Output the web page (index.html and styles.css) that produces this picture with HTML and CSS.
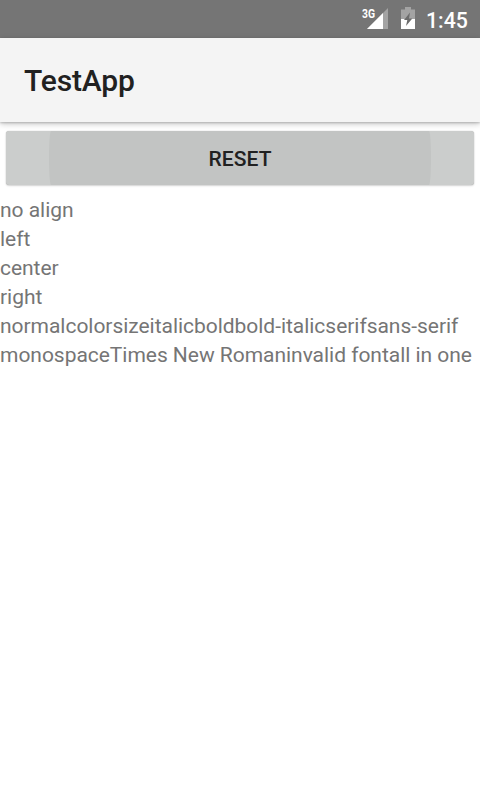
FILE: index.html
```html
<!DOCTYPE html>
<html lang="en">
<head>
<meta charset="utf-8">
<title>TestApp</title>
<link rel="stylesheet" href="styles.css">
</head>
<body>
<div class="status">
  <svg class="signal" width="28" height="28" viewBox="0 0 28 28">
    <path class="dim" d="M27 4V25H6z"/>
    <path class="solid" d="M22 9V25H6z"/>
    <text x="1" y="14" textLength="13" lengthAdjust="spacingAndGlyphs">3G</text>
  </svg>
  <svg class="battery" width="14" height="22" viewBox="0 0 14 22">
    <path class="dim" d="M0 2.5H4V0H10V2.5H14V12H0z"/>
    <path class="solid" d="M0 12H14V22H0z"/>
    <path class="bolt" d="M9 5.5L3 13H6.3L5 19L11.3 11.5H8z"/>
  </svg>
  <span class="clock">1:45</span>
</div>
<header class="bar">TestApp</header>
<button class="reset"><span>RESET</span></button>
<main class="text">
  <div>no align</div>
  <div>left</div>
  <div>center</div>
  <div>right</div>
  <div>normalcolorsizeitalicboldbold-italicserifsans-serif</div>
  <div>monospaceTimes New Romaninvalid fontall in one</div>
</main>
</body>
</html>
```
FILE: styles.css
```css
body { margin: 0; background: #fff; font-family: Roboto, sans-serif; height: 800px; overflow: hidden; }
.status { height: 38px; background: #757575; display: flex; align-items: flex-start; justify-content: flex-end; padding: 4px 12px 0 0; box-sizing: border-box; color: #fff; }
.signal { margin-right: 12px; }
.signal text { font: 700 12px Roboto, sans-serif; fill: #fff; }
.battery { margin: 3px 11px 0 0; }
.dim { fill: #a3a3a3; }
.solid { fill: #fff; }
.bolt { fill: #6c6c6c; }
.clock { width: 42px; font-size: 21.3px; line-height: 33px; font-weight: 500; }
.bar { height: 84px; background: #f4f4f4; display: flex; align-items: center; padding-left: 24px; font-size: 30px; letter-spacing: -.15px; font-weight: 500; color: #212121; box-shadow: 0 1px 2px rgba(0,0,0,.18), 0 2px 6px rgba(0,0,0,.22); }
.reset { display: flex; justify-content: center; width: 468px; height: 54px; margin: 9px 6px 10px; padding: 0; border: 0; border-radius: 3px; background: #cbcdcc; box-shadow: 0 0 1px rgba(0,0,0,.3), 0 1px 2px rgba(0,0,0,.15); }
.reset span { width: 382px; height: 54px; box-sizing: border-box; padding-top: 1px; border-radius: 2px / 27px; background: #c2c4c3; font: 500 21px/54px Roboto, sans-serif; letter-spacing: .1px; color: #212121; }
.text { padding-top: 1px; font-size: 21px; line-height: 29px; letter-spacing: -.035px; color: #757575; white-space: nowrap; }
```
